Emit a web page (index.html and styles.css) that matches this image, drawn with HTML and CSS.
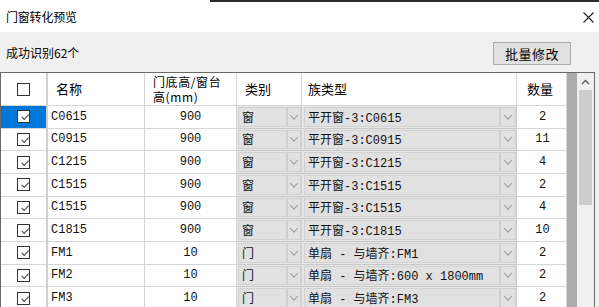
FILE: index.html
```html
<!DOCTYPE html>
<html lang="zh">
<head>
<meta charset="utf-8">
<link rel="stylesheet" href="styles.css">
</head>
<body>
<div class="topstrip"></div>
<div class="titlebar">
  <span class="title">门窗转化预览</span>
  <svg class="close" width="11" height="11" viewBox="0 0 11 11"><path d="M0.5 0.5 L10.5 10.5 M10.5 0.5 L0.5 10.5" stroke="#222" stroke-width="1.1" fill="none"/></svg>
</div>
<div class="toolbar">
  <span class="count">成功识别62个</span>
  <button class="btn">批量修改</button>
</div>
<div class="gridwrap">
  <div class="grid">
    <div class="h chk"><span class="box"></span></div>
    <div class="h name">名称</div>
    <div class="h hgt"><span>门底高/窗台<br>高(mm)</span></div>
    <div class="h cat">类别</div>
    <div class="h fam">族类型</div>
    <div class="h qty">数量</div>

    <div class="c chk sel"><span class="box on"></span></div>
    <div class="c name">C0615</div><div class="c hgt">900</div>
    <div class="c combo"><div class="cb"><span class="cbt">窗</span><span class="arr"></span></div></div>
    <div class="c combo fam"><div class="cb"><span class="cbt">平开窗-3:C0615</span><span class="arr"></span></div></div>
    <div class="c qty">2</div>

    <div class="c chk"><span class="box on"></span></div>
    <div class="c name">C0915</div><div class="c hgt">900</div>
    <div class="c combo"><div class="cb"><span class="cbt">窗</span><span class="arr"></span></div></div>
    <div class="c combo fam"><div class="cb"><span class="cbt">平开窗-3:C0915</span><span class="arr"></span></div></div>
    <div class="c qty">11</div>

    <div class="c chk"><span class="box on"></span></div>
    <div class="c name">C1215</div><div class="c hgt">900</div>
    <div class="c combo"><div class="cb"><span class="cbt">窗</span><span class="arr"></span></div></div>
    <div class="c combo fam"><div class="cb"><span class="cbt">平开窗-3:C1215</span><span class="arr"></span></div></div>
    <div class="c qty">4</div>

    <div class="c chk"><span class="box on"></span></div>
    <div class="c name">C1515</div><div class="c hgt">900</div>
    <div class="c combo"><div class="cb"><span class="cbt">窗</span><span class="arr"></span></div></div>
    <div class="c combo fam"><div class="cb"><span class="cbt">平开窗-3:C1515</span><span class="arr"></span></div></div>
    <div class="c qty">2</div>

    <div class="c chk"><span class="box on"></span></div>
    <div class="c name">C1515</div><div class="c hgt">900</div>
    <div class="c combo"><div class="cb"><span class="cbt">窗</span><span class="arr"></span></div></div>
    <div class="c combo fam"><div class="cb"><span class="cbt">平开窗-3:C1515</span><span class="arr"></span></div></div>
    <div class="c qty">4</div>

    <div class="c chk"><span class="box on"></span></div>
    <div class="c name">C1815</div><div class="c hgt">900</div>
    <div class="c combo"><div class="cb"><span class="cbt">窗</span><span class="arr"></span></div></div>
    <div class="c combo fam"><div class="cb"><span class="cbt">平开窗-3:C1815</span><span class="arr"></span></div></div>
    <div class="c qty">10</div>

    <div class="c chk"><span class="box on"></span></div>
    <div class="c name">FM1</div><div class="c hgt">10</div>
    <div class="c combo"><div class="cb"><span class="cbt">门</span><span class="arr"></span></div></div>
    <div class="c combo fam"><div class="cb"><span class="cbt">单扇 - 与墙齐:FM1</span><span class="arr"></span></div></div>
    <div class="c qty">2</div>

    <div class="c chk"><span class="box on"></span></div>
    <div class="c name">FM2</div><div class="c hgt">10</div>
    <div class="c combo"><div class="cb"><span class="cbt">门</span><span class="arr"></span></div></div>
    <div class="c combo fam"><div class="cb"><span class="cbt">单扇 - 与墙齐:600 x 1800mm</span><span class="arr"></span></div></div>
    <div class="c qty">2</div>

    <div class="c chk"><span class="box on"></span></div>
    <div class="c name">FM3</div><div class="c hgt">10</div>
    <div class="c combo"><div class="cb"><span class="cbt">门</span><span class="arr"></span></div></div>
    <div class="c combo fam"><div class="cb"><span class="cbt">单扇 - 与墙齐:FM3</span><span class="arr"></span></div></div>
    <div class="c qty">2</div>
  </div>
  <div class="vscroll">
    <div class="up"><svg width="9" height="6" viewBox="0 0 9 6"><path d="M1 5 L4.5 1.5 L8 5" stroke="#555" stroke-width="1.3" fill="none"/></svg></div>
    <div class="thumb"></div>
  </div>
</div>
</body>
</html>
```

FILE: styles.css
```css
* { box-sizing: border-box; }
html, body { margin: 0; padding: 0; }
body {
  width: 599px;
  height: 307px;
  overflow: hidden;
  background: #f0f0f0;
  font-family: "Noto Sans CJK SC", "Noto Sans", sans-serif;
  font-size: 12px;
  color: #000;
  position: relative;
}
.topstrip {
  position: absolute;
  left: 210px;
  top: 0;
  width: 389px;
  height: 2px;
  background: #2b2b2b;
}
.titlebar {
  height: 32px;
  background: #fff;
  display: flex;
  align-items: center;
  justify-content: space-between;
  padding: 1px 5px 0 6px;
}
.title { font-size: 12px; letter-spacing: -0.2px; }
.close { margin-top: 1px; }
.toolbar {
  height: 40px;
  display: flex;
  align-items: center;
  justify-content: space-between;
  padding: 0 28px 0 6px;
}
.btn {
  width: 78px;
  height: 23px;
  margin-top: 2px;
  background: #e1e1e1;
  border: 1px solid #adadad;
  font-family: "Noto Sans CJK SC", sans-serif;
  font-size: 13px;
  letter-spacing: 0.5px;
  color: #000;
  padding: 0;
}
.gridwrap {
  width: 595px;
  height: 240px;
  border: 1px solid #6a6a6a;
  border-bottom: none;
  display: flex;
}
.grid {
  width: 576px;
  background: #ababab;
  display: grid;
  grid-template-columns: 47px 97px 92px 65px 215px 50px;
  grid-template-rows: 33px repeat(9, 22.67px);
  align-content: start;
}
.h, .c {
  background: #fff;
  border-right: 1px solid #d6d6d6;
  border-bottom: 1px solid #d6d6d6;
  display: flex;
  align-items: center;
  overflow: hidden;
  white-space: nowrap;
}
.h {
  font-size: 13px;
  line-height: 14px;
  padding-left: 8px;
}
.h.hgt { font-size: 12px; line-height: 15px; letter-spacing: 0.6px; padding-top: 0; }
.h.fam { padding-left: 6px; }
.h.qty { padding-left: 10px; }
.chk {
  justify-content: center;
  padding-left: 0;
  border-right: 2px solid #d0d0d0;
}
.sel { background: #0078d7; }
.box {
  width: 13px;
  height: 13px;
  border: 1px solid #333;
  background: #fff;
  position: relative;
}
.box.on::after {
  content: "";
  position: absolute;
  left: 2.5px;
  top: 1px;
  width: 6px;
  height: 3px;
  border-left: 1px solid #444;
  border-bottom: 1px solid #444;
  transform: rotate(-45deg) translate(-1px, 2px);
}
.c {
  font-family: "Liberation Mono", "Noto Sans CJK SC", monospace;
  font-size: 12px;
  color: #111;
}
.c.name { padding-left: 3px; }
.c.hgt, .c.qty { justify-content: center; }
.c.qty { padding-left: 2px; }
.c.combo {
  background: #e6e6e6;
  padding: 1px 0 1px 1px;
  border-right: 1px solid #cfcfcf;
  border-bottom: 1px solid #c8c8c8;
  align-items: stretch;
}
.c.combo.fam { padding-left: 2px; }
.cb {
  flex: 1;
  display: flex;
  background: #e1e1e1;
  border: 1px solid #d2d2d2;
}
.cbt {
  flex: 1;
  display: flex;
  align-items: center;
  padding-left: 3px;
  overflow: hidden;
}
.arr {
  width: 14px;
  border-left: 2px solid #cfcfcf;
  position: relative;
}
.fam .arr { width: 16px; }
.arr::after {
  content: "";
  position: absolute;
  left: 50%;
  top: 50%;
  width: 5px;
  height: 5px;
  border-right: 1px solid #9a9a9a;
  border-bottom: 1px solid #9a9a9a;
  transform: translate(-50%, -75%) rotate(45deg);
}
.vscroll {
  width: 17px;
  background: #f0f0f0;
  display: flex;
  flex-direction: column;
}
.up {
  height: 17px;
  display: flex;
  align-items: center;
  justify-content: center;
}
.thumb {
  margin: 0 2px;
  height: 115px;
  background: #cdcdcd;
}
```
